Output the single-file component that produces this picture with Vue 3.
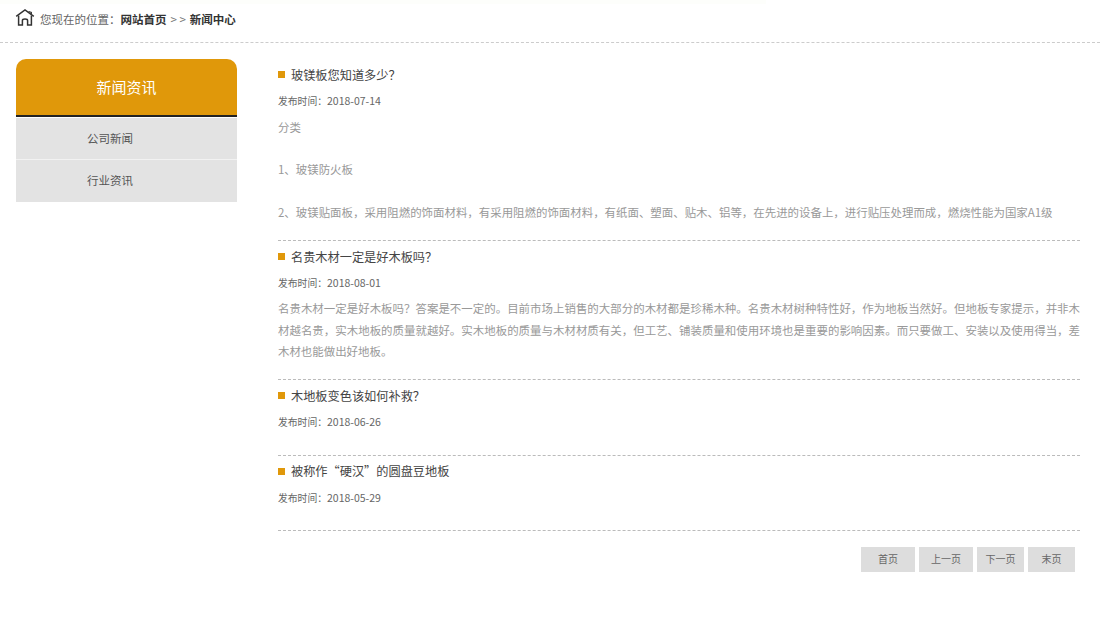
<script setup>
const items = [
  { title: '玻镁板您知道多少？', date: '2018-07-14', lines: ['分类', '', '1、玻镁防火板', '', '2、玻镁贴面板，采用阻燃的饰面材料，有采用阻燃的饰面材料，有纸面、塑面、贴木、铝等，在先进的设备上，进行贴压处理而成，燃烧性能为国家A1级'] },
  { title: '名贵木材一定是好木板吗？', date: '2018-08-01', lines: ['名贵木材一定是好木板吗？答案是不一定的。目前市场上销售的大部分的木材都是珍稀木种。名贵木材树种特性好，作为地板当然好。但地板专家提示，并非木材越名贵，实木地板的质量就越好。实木地板的质量与木材材质有关，但工艺、铺装质量和使用环境也是重要的影响因素。而只要做工、安装以及使用得当，差木材也能做出好地板。'] },
  { title: '木地板变色该如何补救？', date: '2018-06-26', lines: [] },
  { title: '被称作“硬汉”的圆盘豆地板', date: '2018-05-29', lines: [] }
]
const pages = [
  { label: '首页', w: 54 },
  { label: '上一页', w: 54 },
  { label: '下一页', w: 47 },
  { label: '末页', w: 47 }
]
</script>

<template>
  <div class="page">
    <div class="topstrip"></div>
    <header class="crumb">
      <svg class="home" viewBox="0 0 20 18" width="20" height="18" fill="none" stroke="#333" stroke-width="1.5">
        <path d="M1.2 7.4 10 1 18.8 7.4" />
        <path d="M13.6 2.4 16.4 3.4V5.4" stroke-width="1.1" />
        <path d="M3.6 6.5V16H7.4V11.6C7.4 9.4 12.6 9.4 12.6 11.6V16H16.4V6.5" />
      </svg>
      <span class="here">您现在的位置：</span>
      <b>网站首页</b>
      <span class="sep">&gt; &gt;</span>
      <b>新闻中心</b>
    </header>
    <main class="body">
      <aside class="side">
        <div class="side-head">新闻资讯</div>
        <div class="side-rule"></div>
        <a class="side-item">公司新闻</a>
        <a class="side-item">行业资讯</a>
      </aside>
      <section class="list">
        <article v-for="n in items" :key="n.title" class="news">
          <h3><i></i>{{ n.title }}</h3>
          <div class="date">发布时间：<span>{{ n.date }}</span></div>
          <div v-if="n.lines.length" class="text">
            <p v-for="(l, i) in n.lines" :key="i">{{ l || '\u00a0' }}</p>
          </div>
        </article>
        <nav class="pager">
          <a v-for="p in pages" :key="p.label" :style="{ width: p.w + 'px' }">{{ p.label }}</a>
        </nav>
      </section>
    </main>
  </div>
</template>

<style>
html, body { margin: 0; background: #fff; }
</style>

<style scoped>
.page {
  position: relative;
  width: 1100px;
  height: 618px;
  overflow: hidden;
  background: #fff;
  font-family: "Noto Sans CJK SC", "Liberation Sans", sans-serif;
  color: #666;
  font-size: 11.5px;
}
.topstrip {
  position: absolute;
  left: 0;
  top: 0;
  width: 766px;
  height: 4px;
  background: #fdfefb;
}
.crumb {
  height: 43px;
  box-sizing: border-box;
  border-bottom: 1px dashed #ccc;
  padding: 0 0 5px 15px;
  display: flex;
  align-items: center;
  font-size: 11.5px;
}
.home { margin-right: 5px; margin-top: -2px; }
.crumb b { color: #333; font-weight: 700; }
.here { color: #666; }
.sep { margin: 0 4px; color: #777; }
.body {
  display: flex;
  padding: 16px 20px 0 16px;
}
.side { width: 221px; flex: none; }
.side-head {
  height: 56px;
  line-height: 56px;
  background: #e0980a;
  border-radius: 10px 10px 0 0;
  color: #fff;
  text-align: center;
  font-size: 15px;
}
.side-rule {
  height: 2px;
  background: #222;
  border-bottom: 1px solid #fff;
}
.side-item {
  display: block;
  box-sizing: border-box;
  height: 42px;
  line-height: 41px;
  background: #e3e3e3;
  border-bottom: 1px solid #f2f2f2;
  text-align: center;
  padding-right: 33px;
  color: #555;
  font-size: 11.5px;
}
.side-item:last-child { border-bottom: 0; }
.list {
  margin-left: 41px;
  flex: 1;
  min-width: 0;
}
.news {
  border-bottom: 1px dashed #bbb;
  padding-bottom: 16px;
}
.news h3 {
  margin: 0;
  height: 33px;
  box-sizing: border-box;
  padding-bottom: 1.4px;
  display: flex;
  align-items: center;
  font-weight: 400;
  font-size: 12.2px;
  color: #444;
}
.news h3 i {
  width: 7px;
  height: 7px;
  background: #e0980a;
  margin-right: 6px;
  flex: none;
}
.date {
  height: 19px;
  line-height: 17px;
  font-size: 9.8px;
  color: #666;
  margin-bottom: 6.5px;
}
.date span { font-size: 10.5px; }
.text {
  color: #999;
  font-size: 11.45px;
  line-height: 21.25px;
  position: relative;
  top: -1px;
}
.text p { margin: 0; text-align: justify; }
.pager {
  display: flex;
  justify-content: flex-end;
  gap: 4px;
  margin-top: 16px;
  padding-right: 5px;
}
.pager a {
  height: 25px;
  line-height: 24px;
  background: #ddd;
  color: #666;
  font-size: 10px;
  text-align: center;
}
</style>
